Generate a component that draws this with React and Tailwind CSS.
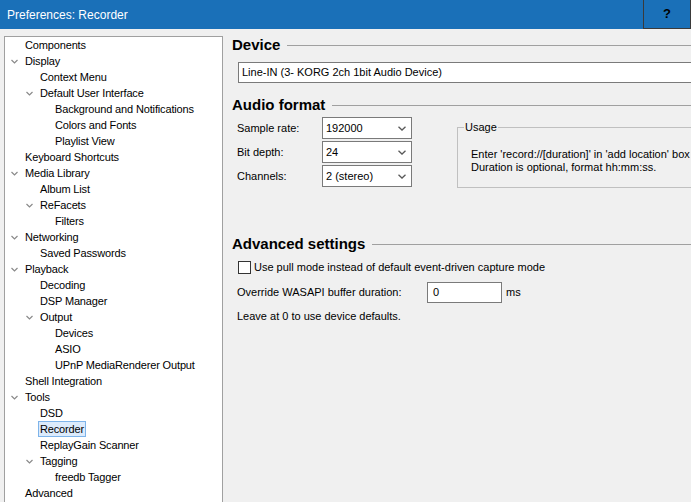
import React from "react";

const font = { fontFamily: '"Liberation Sans", Arial, sans-serif' };

const tree = [
  { l: 1, t: "Components" },
  { l: 1, t: "Display", c: true },
  { l: 2, t: "Context Menu" },
  { l: 2, t: "Default User Interface", c: true },
  { l: 3, t: "Background and Notifications" },
  { l: 3, t: "Colors and Fonts" },
  { l: 3, t: "Playlist View" },
  { l: 1, t: "Keyboard Shortcuts" },
  { l: 1, t: "Media Library", c: true },
  { l: 2, t: "Album List" },
  { l: 2, t: "ReFacets", c: true },
  { l: 3, t: "Filters" },
  { l: 1, t: "Networking", c: true },
  { l: 2, t: "Saved Passwords" },
  { l: 1, t: "Playback", c: true },
  { l: 2, t: "Decoding" },
  { l: 2, t: "DSP Manager" },
  { l: 2, t: "Output", c: true },
  { l: 3, t: "Devices" },
  { l: 3, t: "ASIO" },
  { l: 3, t: "UPnP MediaRenderer Output" },
  { l: 1, t: "Shell Integration" },
  { l: 1, t: "Tools", c: true },
  { l: 2, t: "DSD" },
  { l: 2, t: "Recorder", sel: true },
  { l: 2, t: "ReplayGain Scanner" },
  { l: 2, t: "Tagging", c: true },
  { l: 3, t: "freedb Tagger" },
  { l: 1, t: "Advanced" },
];

function Chevron() {
  return (
    <svg width="7" height="5" viewBox="0 0 7 5" className="block">
      <polyline points="0.5,1 3.5,4 6.5,1" fill="none" stroke="#8a8a8a" strokeWidth="1.2" />
    </svg>
  );
}

function TreeRow({ l, t, c, sel }) {
  const pad = l === 1 ? "pl-[20px]" : l === 2 ? "pl-[35px]" : "pl-[50px]";
  return (
    <div className={`flex items-center h-[16px] ${c ? (l === 1 ? "pl-0" : "pl-[15px]") : pad}`}>
      {c && (
        <div className="w-[20px] pl-[6px] flex items-center">
          <Chevron />
        </div>
      )}
      <span
        className={`leading-[14px] h-[16px] flex items-center tracking-[-0.15px] ${
          sel ? "border border-[#7eb4ea] bg-[#dcebfc] px-[1px] -ml-[2px]" : "border border-transparent px-[1px] -ml-[2px]"
        }`}
      >
        {t}
      </span>
    </div>
  );
}

function Heading({ children }) {
  return (
    <div className="flex items-center h-[20px]">
      <span className="font-bold text-[15px] text-black whitespace-nowrap">{children}</span>
      <div className="flex-1 h-px bg-[#a0a0a0] ml-[7px]" />
    </div>
  );
}

function Select({ value }) {
  return (
    <div className="w-[90px] h-[22px] bg-white border border-[#7a7a7a] flex items-center justify-between pl-[3px] pr-[5px]">
      <span>{value}</span>
      <svg width="8" height="5" viewBox="0 0 8 5">
        <polyline points="0.5,0.8 4,4 7.5,0.8" fill="none" stroke="#5a5a5a" strokeWidth="1.3" />
      </svg>
    </div>
  );
}

export default function App() {
  return (
    <div className="w-[691px] h-[502px] bg-[#f0f0f0] flex flex-col overflow-hidden text-[11px] text-black" style={font}>
      <div className="h-[29px] bg-[#1a70b8] flex items-center shrink-0">
        <span className="text-white text-[12px] pl-[7px] flex-1">Preferences: Recorder</span>
        <div className="w-[48px] h-[29px] border border-[#3a3a3a] border-t-0 flex items-center justify-center font-bold text-[13px] text-black">
          ?
        </div>
      </div>
      <div className="flex flex-1 min-h-0 pt-[7px] pl-[4px]">
        <div className="w-[219px] shrink-0 bg-white border-l border-t border-r border-[#a0a0a0]">
          {tree.map((r, i) => (
            <TreeRow key={i} {...r} />
          ))}
        </div>
        <div className="flex-1 min-w-0 overflow-hidden pl-[9px] -mt-[1px]">
          <Heading>Device</Heading>
          <div className="mt-[7px] ml-[6px] w-[480px] h-[21px] bg-white border border-[#7a7a7a] flex items-center pl-[3px]">
            Line-IN (3- KORG 2ch 1bit Audio Device)
          </div>
          <div className="mt-[12px]">
            <Heading>Audio format</Heading>
          </div>
          <div className="flex mt-[2px] ml-[5px]">
            <div className="flex flex-col gap-[2px]">
              {[
                ["Sample rate:", "192000"],
                ["Bit depth:", "24"],
                ["Channels:", "2 (stereo)"],
              ].map(([a, b]) => (
                <div key={a} className="flex items-center">
                  <span className="w-[85px]">{a}</span>
                  <Select value={b} />
                </div>
              ))}
            </div>
            <div className="ml-[45px] mt-[10px] w-[300px] h-[61px] shrink-0 border border-[#c0c0c0] relative pl-[13px] pt-[20px]">
              <span className="absolute -top-[8px] left-[6px] bg-[#f0f0f0] px-[1px] leading-[14px]">Usage</span>
              <div className="whitespace-nowrap leading-[13px]">Enter 'record://[duration]' in 'add location' box</div>
              <div className="whitespace-nowrap leading-[13px]">Duration is optional, format hh:mm:ss.</div>
            </div>
          </div>
          <div className="mt-[46px]">
            <Heading>Advanced settings</Heading>
          </div>
          <div className="ml-[6px] mt-[5px] flex items-center">
            <div className="w-[13px] h-[13px] border border-[#333] bg-white" />
            <span className="ml-[3px]">Use pull mode instead of default event-driven capture mode</span>
          </div>
          <div className="ml-[5px] mt-[6px] flex items-center">
            <span className="w-[190px]">Override WASAPI buffer duration:</span>
            <div className="w-[75px] h-[21px] bg-white border border-[#7a7a7a] flex items-center pl-[5px]">0</div>
            <span className="ml-[4px]">ms</span>
          </div>
          <div className="ml-[5px] mt-[5px]">Leave at 0 to use device defaults.</div>
        </div>
      </div>
    </div>
  );
}
